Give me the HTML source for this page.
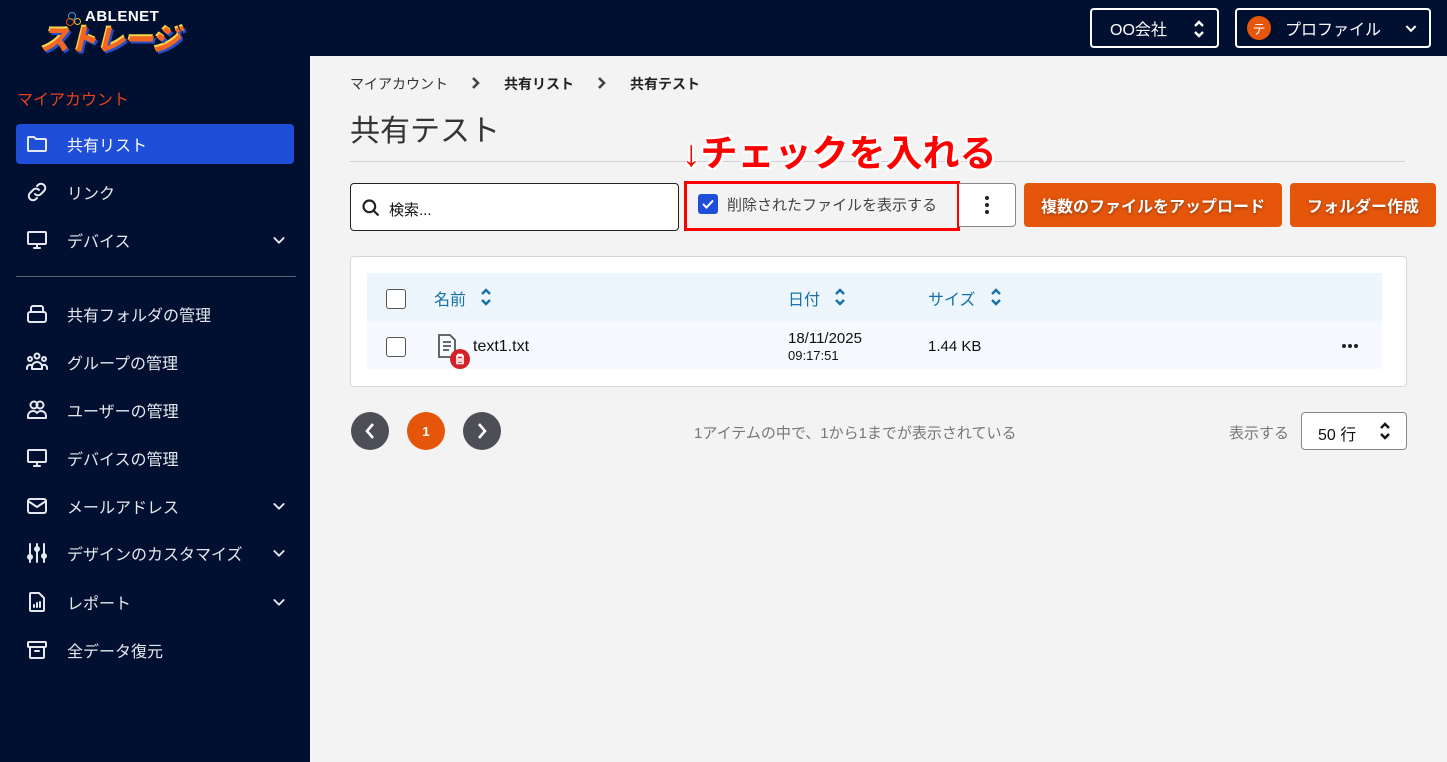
<!DOCTYPE html>
<html><head><meta charset="utf-8"><style>
*{box-sizing:border-box;margin:0;padding:0}
body{width:1447px;height:762px;overflow:hidden;background:#f3f3f3;font-family:"Liberation Sans","Noto Sans CJK JP",sans-serif;position:relative;color:#222}
.top{position:absolute;left:0;top:0;width:1447px;height:56px;background:#010f30}
.side{position:absolute;left:0;top:0;width:310px;height:762px;background:#010f30;color:#e6e8ee}
.abs{position:absolute}
.nav{position:absolute;left:16px;width:278px;height:40px;display:flex;align-items:center;font-size:16px;color:#e6e8ee}
.nav svg{position:absolute;left:9px;width:24px;height:24px;fill:none;stroke:#e6e8ee;stroke-width:2;stroke-linecap:round;stroke-linejoin:round}
.nav span{position:absolute;left:51px}
.nav .chev{position:absolute;left:255px;width:16px;height:16px;stroke-width:2.8}
.btnt{position:absolute;top:8px;height:40px;border:2px solid #fff;border-radius:4px;color:#fff;font-size:16px;display:flex;align-items:center}
.or{position:absolute;top:183px;height:44px;background:#e5560b;border-radius:4px;color:#fff;font-weight:bold;font-size:16px;display:flex;align-items:center;justify-content:center;text-shadow:0 1px 3px rgba(0,0,0,.4)}
.cb{position:absolute;width:20px;height:20px;border:1.5px solid #555;border-radius:3px;background:#fff}
.hd{position:absolute;top:286px;color:#1671a8;font-size:16px}
</style></head><body>
<div class="top"></div>
<div class="side">
  <div class="abs" style="left:68px;top:12px;width:8px;height:8px;border:1.5px solid #3aa0c8;border-radius:50%"></div>
  <div class="abs" style="left:66px;top:18px;width:8px;height:8px;border:1.5px solid #e5560b;border-radius:50%"></div>
  <div class="abs" style="left:74px;top:18px;width:7px;height:7px;border:1.5px solid #e6c23a;border-radius:50%"></div>
  <div class="abs" style="left:85px;top:8px;font-size:15px;font-weight:bold;color:#fff;letter-spacing:.5px">ABLENET</div>
  <div class="abs" style="left:40px;top:24px;font-size:29px;font-weight:900;font-style:italic;color:#f26522;text-shadow:2px 2px 0 #2450c8,-1px -2px 0 #f7d54a;letter-spacing:-1px;line-height:34px">ストレージ</div>
  <div class="abs" style="left:17px;top:86px;font-size:16px;color:#e8401a">マイアカウント</div>
  <div class="nav" style="top:124px;background:#1f4fd8;border-radius:4px;color:#fff"><svg viewBox="0 0 24 24"><path d="M3 6a1 1 0 0 1 1-1h5l2 2h9a1 1 0 0 1 1 1v10a1 1 0 0 1-1 1H4a1 1 0 0 1-1-1z"/></svg><span>共有リスト</span></div>
  <div class="nav" style="top:172px"><svg viewBox="0 0 24 24"><path d="M10 14a4 4 0 0 0 6 0l3-3a4 4 0 0 0-6-6l-1 1M14 10a4 4 0 0 0-6 0l-3 3a4 4 0 0 0 6 6l1-1"/></svg><span>リンク</span></div>
  <div class="nav" style="top:220px"><svg viewBox="0 0 24 24"><rect x="3" y="4" width="18" height="12" rx="1"/><path d="M9 20h6M12 16v4"/></svg><span>デバイス</span><svg class="chev" viewBox="0 0 24 24"><path d="M5 9l7 7 7-7"/></svg></div>
  <div class="abs" style="left:16px;top:276px;width:280px;height:1px;background:#5a6275"></div>
  <div class="nav" style="top:294px"><svg viewBox="0 0 24 24"><path d="M6 10V6a2 2 0 0 1 2-2h8a2 2 0 0 1 2 2v4M3 12a2 2 0 0 1 2-2h14a2 2 0 0 1 2 2v6a2 2 0 0 1-2 2H5a2 2 0 0 1-2-2z"/></svg><span>共有フォルダの管理</span></div>
  <div class="nav" style="top:342px"><svg viewBox="0 0 24 24"><circle cx="12" cy="6" r="2.5"/><circle cx="5" cy="9" r="2"/><circle cx="19" cy="9" r="2"/><path d="M7 19v-2a5 5 0 0 1 10 0v2zM2 19v-1a3 3 0 0 1 4-3M22 19v-1a3 3 0 0 0-4-3"/></svg><span>グループの管理</span></div>
  <div class="nav" style="top:390px"><svg viewBox="0 0 24 24"><circle cx="9" cy="7" r="3.5"/><circle cx="15" cy="7" r="3.5"/><path d="M3 20v-2a5 5 0 0 1 9-3a5 5 0 0 1 9 3v2z"/></svg><span>ユーザーの管理</span></div>
  <div class="nav" style="top:438px"><svg viewBox="0 0 24 24"><rect x="3" y="4" width="18" height="12" rx="1"/><path d="M9 20h6M12 16v4"/></svg><span>デバイスの管理</span></div>
  <div class="nav" style="top:486px"><svg viewBox="0 0 24 24"><rect x="3" y="5" width="18" height="14" rx="2"/><path d="M3 7l9 6 9-6"/></svg><span>メールアドレス</span><svg class="chev" viewBox="0 0 24 24"><path d="M5 9l7 7 7-7"/></svg></div>
  <div class="nav" style="top:533px"><svg viewBox="0 0 24 24"><path d="M5 3v18M12 3v18M19 3v18"/><circle cx="5" cy="16" r="2"/><circle cx="12" cy="8" r="2"/><circle cx="19" cy="15" r="2"/></svg><span>デザインのカスタマイズ</span><svg class="chev" viewBox="0 0 24 24"><path d="M5 9l7 7 7-7"/></svg></div>
  <div class="nav" style="top:582px"><svg viewBox="0 0 24 24"><path d="M6 3h8l5 5v12a1 1 0 0 1-1 1H6a1 1 0 0 1-1-1V4a1 1 0 0 1 1-1zM9 17v-2M12 17v-4M15 17v-5"/></svg><span>レポート</span><svg class="chev" viewBox="0 0 24 24"><path d="M5 9l7 7 7-7"/></svg></div>
  <div class="nav" style="top:630px"><svg viewBox="0 0 24 24"><rect x="3" y="4" width="18" height="5" rx="1"/><path d="M5 9v10a1 1 0 0 0 1 1h12a1 1 0 0 0 1-1V9M10 13h4"/></svg><span>全データ復元</span></div>
</div>

<div class="btnt" style="left:1090px;width:129px"><span style="margin-left:18px">OO会社</span><svg style="position:absolute;left:100px;top:10px" width="14" height="18" viewBox="0 0 14 18" fill="none" stroke="#fff" stroke-width="2.4"><path d="M3 6l4-4 4 4M3 12l4 4 4-4"/></svg></div>
<div class="btnt" style="left:1235px;width:196px"><div style="margin-left:10px;width:24px;height:24px;border-radius:50%;background:#e5560b;font-size:13px;display:flex;align-items:center;justify-content:center">テ</div><span style="margin-left:14px">プロファイル</span><svg style="position:absolute;left:166px;top:12px" width="16" height="14" viewBox="0 0 24 24" fill="none" stroke="#fff" stroke-width="3.5"><path d="M4 7l8 8 8-8"/></svg></div>

<div class="abs" style="left:350px;top:74px;font-size:14px;color:#333">マイアカウント</div>
<svg class="abs" style="left:470px;top:76px" width="12" height="14" viewBox="0 0 12 14" fill="none" stroke="#444" stroke-width="2.6"><path d="M3 2l5 5-5 5"/></svg>
<div class="abs" style="left:504px;top:74px;font-size:14px;font-weight:bold;color:#222">共有リスト</div>
<svg class="abs" style="left:596px;top:76px" width="12" height="14" viewBox="0 0 12 14" fill="none" stroke="#444" stroke-width="2.6"><path d="M3 2l5 5-5 5"/></svg>
<div class="abs" style="left:630px;top:74px;font-size:14px;font-weight:bold;color:#222">共有テスト</div>
<div class="abs" style="left:350px;top:106px;font-size:30px;color:#333">共有テスト</div>
<div class="abs" style="left:350px;top:161px;width:1055px;height:1px;background:#cfd2d8"></div>
<div class="abs" style="left:682px;top:130px;font-size:37px;font-weight:bold;color:#f00;text-shadow:0 0 3px #fff,0 0 3px #fff,2px 2px 0 #fff,-2px -2px 0 #fff,2px -2px 0 #fff,-2px 2px 0 #fff;white-space:nowrap;line-height:48px">↓チェックを入れる</div>

<div class="abs" style="left:350px;top:183px;width:329px;height:48px;border:1px solid #222;border-radius:4px;background:#fff"></div>
<svg class="abs" style="left:361px;top:198px" width="20" height="20" viewBox="0 0 24 24" fill="none" stroke="#222" stroke-width="2.6"><circle cx="10" cy="10" r="7"/><path d="M15 15l6 6"/></svg>
<div class="abs" style="left:389px;top:199px;font-size:15px;color:#111">検索...</div>
<div class="abs" style="left:684px;top:181px;width:276px;height:50px;border:3px solid #f00"></div>
<div class="abs" style="left:698px;top:194px;width:20px;height:20px;background:#1f4fd8;border-radius:3px"><svg width="20" height="20" viewBox="0 0 20 20" fill="none" stroke="#fff" stroke-width="2"><path d="M5 10l3.5 3.5L15 6.5"/></svg></div>
<div class="abs" style="left:727px;top:194px;font-size:15px;color:#444">削除されたファイルを表示する</div>
<div class="abs" style="left:959px;top:183px;width:57px;height:44px;border:1px solid #888;border-left:none;border-radius:0 4px 4px 0;background:#fff"></div>
<div class="abs" style="left:985px;top:196px;width:4px;height:4px;border-radius:50%;background:#222;box-shadow:0 7px 0 #222,0 14px 0 #222"></div>
<div class="or" style="left:1024px;width:258px">複数のファイルをアップロード</div>
<div class="or" style="left:1290px;width:146px">フォルダー作成</div>

<div class="abs" style="left:350px;top:256px;width:1057px;height:131px;background:#fff;border:1px solid #d5d7dd;border-radius:4px"></div>
<div class="abs" style="left:367px;top:273px;width:1015px;height:48px;background:#eef6fd"></div>
<div class="abs" style="left:367px;top:321px;width:1015px;height:48px;background:#f6f9fd"></div>
<div class="cb" style="left:386px;top:289px"></div>
<div class="cb" style="left:386px;top:337px"></div>
<div class="hd" style="left:434px">名前</div>
<div class="hd" style="left:788px">日付</div>
<div class="hd" style="left:928px">サイズ</div>
<svg class="abs" style="left:479px;top:287px" width="14" height="20" viewBox="0 0 14 20" fill="none" stroke="#1671a8" stroke-width="2.4"><path d="M3 7l4-4 4 4M3 13l4 4 4-4"/></svg>
<svg class="abs" style="left:833px;top:287px" width="14" height="20" viewBox="0 0 14 20" fill="none" stroke="#1671a8" stroke-width="2.4"><path d="M3 7l4-4 4 4M3 13l4 4 4-4"/></svg>
<svg class="abs" style="left:989px;top:287px" width="14" height="20" viewBox="0 0 14 20" fill="none" stroke="#1671a8" stroke-width="2.4"><path d="M3 7l4-4 4 4M3 13l4 4 4-4"/></svg>
<svg class="abs" style="left:436px;top:333px" width="22" height="28" viewBox="0 0 22 28" fill="none" stroke="#555" stroke-width="1.8"><path d="M3 2h11l5 5v17H3z"/><path d="M7 9h8M7 13h8M7 17h6"/></svg>
<div class="abs" style="left:450px;top:349px;width:20px;height:20px;border-radius:50%;background:#d42027"><svg width="20" height="20" viewBox="0 0 20 20" fill="none" stroke="#fff" stroke-width="1.6"><path d="M6 7h8M8 7V5.5h4V7M7 7.5v7h6v-7M9 9v4M11 9v4"/></svg></div>
<div class="abs" style="left:473px;top:338px;font-size:16px;color:#111">text1.txt</div>
<div class="abs" style="left:788px;top:330px;font-size:15px;color:#111">18/11/2025</div>
<div class="abs" style="left:788px;top:348px;font-size:13px;color:#111">09:17:51</div>
<div class="abs" style="left:928px;top:338px;font-size:15px;color:#111">1.44 KB</div>
<div class="abs" style="left:1342px;top:344px;width:4px;height:4px;border-radius:50%;background:#222;box-shadow:6px 0 0 #222,12px 0 0 #222"></div>

<div class="abs" style="left:351px;top:412px;width:38px;height:38px;border-radius:50%;background:#4e4f56"><svg width="38" height="38" viewBox="0 0 38 38" fill="none" stroke="#fff" stroke-width="2.6"><path d="M22 12l-6 7 6 7"/></svg></div>
<div class="abs" style="left:407px;top:412px;width:38px;height:38px;border-radius:50%;background:#e5560b;color:#fff;font-size:13px;font-weight:bold;display:flex;align-items:center;justify-content:center">1</div>
<div class="abs" style="left:463px;top:412px;width:38px;height:38px;border-radius:50%;background:#4e4f56"><svg width="38" height="38" viewBox="0 0 38 38" fill="none" stroke="#fff" stroke-width="2.6"><path d="M16 12l6 7-6 7"/></svg></div>
<div class="abs" style="left:694px;top:422px;font-size:15px;color:#777">1アイテムの中で、1から1までが表示されている</div>
<div class="abs" style="left:1229px;top:422px;font-size:15px;color:#777">表示する</div>
<div class="abs" style="left:1301px;top:412px;width:106px;height:38px;border:1px solid #888;border-radius:4px;background:#fff"></div>
<div class="abs" style="left:1318px;top:421px;font-size:16px;color:#111">50 行</div>
<svg class="abs" style="left:1378px;top:421px" width="14" height="20" viewBox="0 0 14 20" fill="none" stroke="#111" stroke-width="2.4"><path d="M3 7l4-4 4 4M3 13l4 4 4-4"/></svg>
</body></html>
